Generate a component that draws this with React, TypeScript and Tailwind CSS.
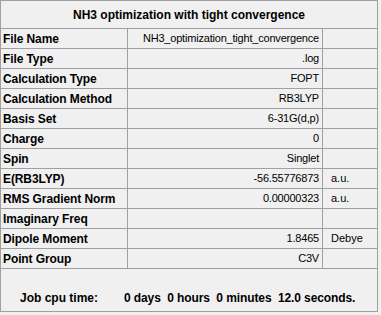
import React from 'react';

interface Row {
  label: string;
  value: string;
  unit?: string;
}

const rows: Row[] = [
  { label: 'File Name', value: 'NH3_optimization_tight_convergence' },
  { label: 'File Type', value: '.log' },
  { label: 'Calculation Type', value: 'FOPT' },
  { label: 'Calculation Method', value: 'RB3LYP' },
  { label: 'Basis Set', value: '6-31G(d,p)' },
  { label: 'Charge', value: '0' },
  { label: 'Spin', value: 'Singlet' },
  { label: 'E(RB3LYP)', value: '-56.55776873', unit: 'a.u.' },
  { label: 'RMS Gradient Norm', value: '0.00000323', unit: 'a.u.' },
  { label: 'Imaginary Freq', value: '' },
  { label: 'Dipole Moment', value: '1.8465', unit: 'Debye' },
  { label: 'Point Group', value: 'C3V' },
];

const App: React.FC = () => {
  return (
    <div
      className="w-[381px] h-[315px] bg-[#f0f0f0] text-black text-[11px] leading-none"
      style={{ fontFamily: '"Liberation Sans", Arial, sans-serif' }}
    >
      <div className="w-[378px] h-[312px] border border-[#a0a0a0] flex flex-col">
        {/* Title */}
        <div className="h-[28px] border-b border-[#a0a0a0] flex items-center justify-center font-bold text-[12px] shrink-0">
          NH3 optimization with tight convergence
        </div>

        {/* Properties table */}
        {rows.map((r) => (
          <div
            key={r.label}
            className="h-[20px] shrink-0 grid grid-cols-[127px_195px_1fr] border-b border-[#a0a0a0]"
          >
            <div className="border-r border-[#a0a0a0] flex items-center pl-[2px] font-bold text-[12px] tracking-[-0.1px]">
              {r.label}
            </div>
            <div className="border-r border-[#a0a0a0] flex items-center justify-end pr-[3px] tracking-[-0.2px]">
              {r.value}
            </div>
            <div className="flex items-center pl-[8px]">{r.unit}</div>
          </div>
        ))}

        {/* Footer */}
        <div className="flex-1 flex items-start pt-[23px] font-bold text-[12px]">
          <span className="ml-[19px] w-[104px]">Job cpu time:</span>
          <span className="whitespace-pre tracking-[-0.1px]">0 days  0 hours  0 minutes  12.0 seconds.</span>
        </div>
      </div>
    </div>
  );
};

export default App;
